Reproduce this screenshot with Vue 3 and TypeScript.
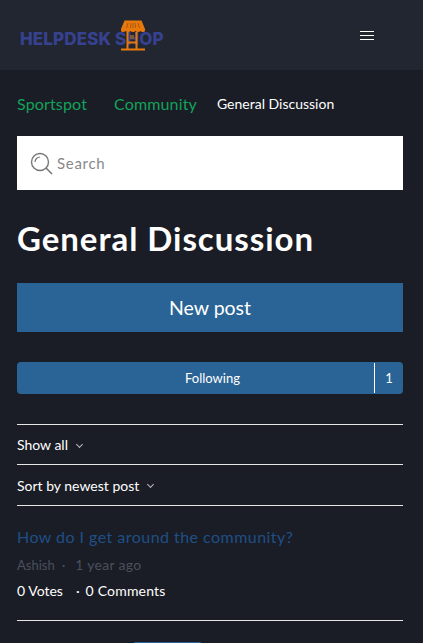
<script setup lang="ts">
const links: string[] = ['Sportspot', 'Community']
</script>

<template>
  <div class="page">
    <header class="top">
      <div class="logo">
        <span class="brand">HELPDESK SHOP</span>
        <svg class="stall" width="26" height="31" viewBox="0 0 26 31" fill="none">
          <path d="M4.500 0.500h17l3.500 8.500v1.500q0 1.500-2 1.500t-2.500-1q-.5 1-2.500 1t-2.500-1q-.5 1-2.500 1t-2.500-1q-.5 1-2.500 1t-2.500-1q-.5 1-2.500 1t-2-1.500v-1.500z" fill="#e8780c"/>
          <path d="M8 3l-1.500 5M11 3l-.7 5M13 3v5M15 3l.7 5M18 3l1.500 5" stroke="#a85a10" stroke-width="1"/>
          <path d="M7.500 12v17M16.500 12v17M1 29.500h24M7.500 22.500h9" stroke="#e8780c" stroke-width="2"/>
          <rect x="10" y="15" width="4" height="4" fill="#7a5a3a"/>
        </svg>
      </div>
      <button class="menu" aria-label="Menu">
        <span></span><span></span><span></span>
      </button>
    </header>

    <main class="content">
      <nav class="crumbs">
        <a v-for="l in links" :key="l" class="crumb">{{ l }}</a>
        <span class="current">General Discussion</span>
      </nav>

      <div class="search">
        <svg width="23" height="23" viewBox="0 0 23 23" fill="none" stroke="#777">
          <circle cx="10" cy="10" r="8.500" stroke-width="1.400"/>
          <path d="M5 10a5 5 0 0 1 5-5" stroke-width="1.200"/>
          <path d="M16 16l6 6" stroke-width="1.600"/>
        </svg>
        <span>Search</span>
      </div>

      <h1>General Discussion</h1>

      <button class="new-post">New post</button>

      <div class="follow">
        <span class="follow-label">Following</span>
        <span class="follow-count">1</span>
      </div>

      <div class="filters">
        <div class="filter">Show all <i class="chev"></i></div>
        <div class="filter">Sort by newest post <i class="chev"></i></div>
      </div>

      <article class="post">
        <a class="post-title">How do I get around the community?</a>
        <div class="meta"><span class="author">Ashish</span><span class="dot">·</span><span class="age">1 year ago</span></div>
        <div class="stats"><span>0 Votes</span><span class="dot2">·</span><span class="comments">0 Comments</span></div>
      </article>

      <div class="pager"></div>
    </main>
  </div>
</template>

<style>
html, body { margin: 0; background: #1a1d25; }
</style>

<style scoped>
.page {
  height: 643px;
  overflow: hidden;
  background: #1a1d25;
  color: #fff;
  font-family: "Lato", "Open Sans", sans-serif;
}
.top {
  height: 70px;
  background: #222630;
  display: flex;
  align-items: center;
  justify-content: space-between;
  padding: 0 49px 0 20px;
}
.logo { position: relative; }
.brand {
  font-family: "Inter", sans-serif;
  font-weight: 800;
  font-size: 17px;
  letter-spacing: .13px;
  color: #36418f;
  white-space: nowrap;
  display: block;
  padding-top: 8px;
}
.stall { position: absolute; left: 100px; top: -1px; }
.menu {
  width: 14px;
  padding: 0;
  border: 0;
  background: none;
  display: flex;
  flex-direction: column;
  gap: 3px;
}
.menu span { height: 1px; background: #fff; }
.content { padding: 0 20px 0 17px; }
.crumbs {
  display: flex;
  align-items: center;
  height: 66px;
  font-size: 15px;
  white-space: nowrap;
}
.crumb { color: #12a35b; font-size: 16px; margin-right: 27px; letter-spacing: .15px; }
.current { font-size: 14px; margin-left: -7px; }
.search {
  height: 54px;
  background: #fff;
  display: flex;
  align-items: center;
  gap: 4px;
  padding-left: 13px;
  color: #888;
  font-size: 15px;
  letter-spacing: .7px;
}
h1 {
  margin: 28px 0 0;
  font-size: 33px;
  line-height: 40px;
  font-weight: 700;
  letter-spacing: .95px;
  white-space: nowrap;
}
.new-post {
  display: block;
  width: 100%;
  height: 49px;
  margin-top: 25px;
  border: 0;
  padding: 0;
  background: #2a6496;
  color: #fff;
  font: inherit;
  font-size: 19.500px;
}
.follow {
  display: flex;
  height: 32px;
  margin-top: 30px;
  border-radius: 4px;
  background: #2a6496;
  font-size: 13px;
  align-items: stretch;
}
.follow-label { flex: 1; display: flex; align-items: center; justify-content: center; padding-left: 34px; }
.follow-count {
  width: 28px;
  display: flex;
  align-items: center;
  justify-content: center;
  border-left: 1px solid #fff;
  margin: 1px 0;
}
.filters { margin-top: 30px; border-top: 1px solid #e6e6e6; }
.filter {
  height: 39px;
  display: flex;
  align-items: center;
  gap: 6px;
  font-size: 14px;
  border-bottom: 1px solid #e6e6e6;
}
.filter + .filter { height: 40px; }
.chev {
  width: 4px;
  height: 4px;
  border-right: 1px solid #bbb;
  border-bottom: 1px solid #bbb;
  transform: rotate(45deg);
  margin: 0 0 1px 3px;
}
.post { padding: 20px 0 19px; border-bottom: 1px solid #e6e6e6; }
.post-title { display: block; color: #1f4f86; font-size: 16px; line-height: 22px; letter-spacing: .46px; }
.meta { margin-top: 7px; color: #4a4f5e; font-size: 14px; line-height: 20px; display: flex; gap: 7px; }
.author { font-size: 13px; }
.age { margin-left: 3px; letter-spacing: .3px; }
.stats { margin-top: 6px; font-size: 14px; line-height: 20px; display: flex; }
.dot2 { margin: 0 6px 0 13px; }
.comments { letter-spacing: .2px; }
.pager { width: 69px; height: 3px; margin: 21px 0 0 116px; background: #2a6496; border-radius: 4px 4px 0 0; }
</style>
